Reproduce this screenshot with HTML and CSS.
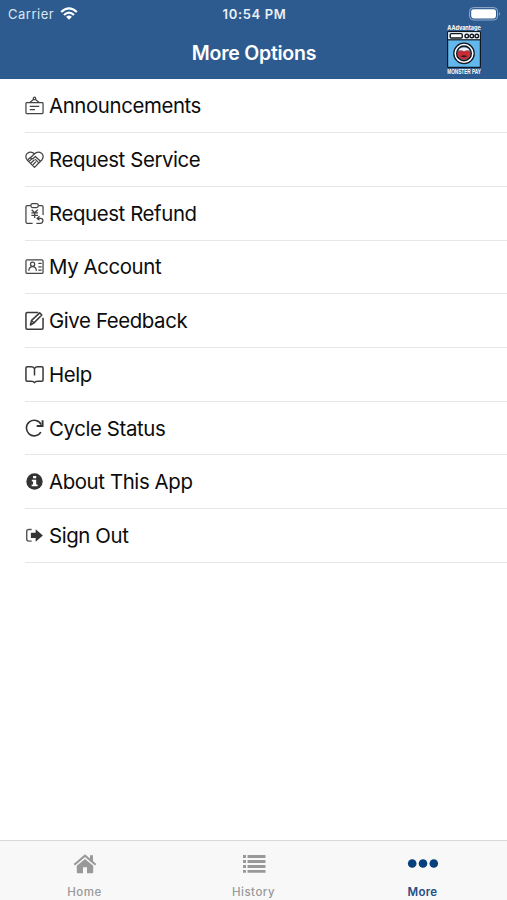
FILE: index.html
```html
<!DOCTYPE html>
<html lang="en">
<head>
<meta charset="utf-8">
<title>More Options</title>
<link rel="stylesheet" href="styles.css">
</head>
<body>
<div class="screen">
  <header class="header">
    <div class="status">
      <div class="carrier"><span>Carrier</span>
        <svg width="18" height="13" viewBox="0 0 18 13"><g fill="none" stroke="#fff" stroke-width="2.3"><path d="M1.2 5Q9-2.2 16.8 5M4 8Q9 3.3 14 8"/></g><path d="M9 12.7L6.1 9.8Q9 7.4 11.9 9.8Z" fill="#fff"/></svg>
      </div>
      <div class="time">10:54 PM</div>
      <div class="battery">
        <svg width="32" height="14" viewBox="0 0 32 14"><rect x=".6" y=".6" width="28" height="12.4" rx="3.8" fill="none" stroke="#93adcc" stroke-width="1"/><rect x="2.2" y="2.2" width="24.8" height="9.2" rx="2.4" fill="#fff"/><path d="M30 4.7q1.8 2.1 0 4.2z" fill="#93adcc"/></svg>
      </div>
    </div>
    <div class="titlebar">
      <h1 class="title">More Options</h1>
      <div class="brand">
        <span class="brand-top">AAdvantage</span>
        <svg width="34" height="37" viewBox="0 0 34 37"><rect x=".6" y=".6" width="32.8" height="35.8" rx="1" fill="#62b8ed" stroke="#111820" stroke-width="1.2"/><path d="M1.2 1.2h31.6v7.5H1.2z" fill="#f4f4f2"/><path d="M1 8.8h32" stroke="#111820" stroke-width="1.2"/><rect x="3.2" y="2.6" width="12" height="4.4" rx="1" fill="#fff" stroke="#111820" stroke-width="1.4"/><g fill="#fff" stroke="#111820" stroke-width="1.4"><circle cx="19.8" cy="5" r="1.8"/><circle cx="24.8" cy="5" r="1.8"/><circle cx="29.8" cy="5" r="1.8"/></g><circle cx="17" cy="22.4" r="10.2" fill="#fff" stroke="#111820" stroke-width="1.3"/><circle cx="17" cy="22.4" r="7.3" fill="#55779f" stroke="#111820" stroke-width="1.5"/><path d="M10.4 22.6q2.2-4.8 6.6-2.6 4.4-2.2 6.6 2.6-1 5.8-6.6 5.900-5.600-.1-6.600-5.900z" fill="#c72d32"/><path d="M13.600 25.300q3.400-2.300 6.800 0-3.400 2-6.800 0z" fill="#351a29"/><path d="M11.500 19.500q1-3 5.500-3t5.500 3q-3-.8-5.500.8-2.500-1.600-5.500-.8z" fill="#e7eff8"/></svg>
        <span class="brand-bottom">MONSTER PAY</span>
      </div>
    </div>
  </header>

  <main class="list">
    <a class="row"><svg class="icon" viewBox="0 0 20 20"><g><rect x="1" y="7" width="18" height="11.500" rx=".8"/><path d="M4.800 7L8.900 3.600M15.200 7l-4.100-3.400M5 11h10M5 14.300h5.500"/><circle cx="10" cy="2.600" r="1.300"/></g></svg><span>Announcements</span></a>
    <a class="row"><svg class="icon" viewBox="0 0 20 20"><g><path d="M10 18.300L2.300 10.500Q-.5 6.500 2.300 3.600 6.300.6 10 4q3.700-3.400 7.700-.4 2.800 2.900 0 6.900z"/><path d="M10 4L5.800 8.200q1.200 2 3.400.2l1.700-1.600 5.400 5M3 10.300l2.800-2.700M6.300 13.700l3.600-3.500M8.300 15.500l3.400-3.300M10.600 9.600l3.700 3.700M4.500 11.800l3.300-3.200"/></g></svg><span>Request Service</span></a>
    <a class="row"><svg class="icon tall" viewBox="0 0 20 24"><g><path d="M6 3.700H2.300Q1 3.700 1 5v16q0 1.500 1.400 1.500H8M14 3.700h3.700Q19 3.700 19 5v8.500"/><rect x="6.200" y="1.500" width="7.800" height="4.200" rx="1.800"/><path d="M7 8l3.200 3.200L13.400 8M6.700 11.300h7M6.700 14h7M10.200 11.300v5.500"/><path d="M15.300 15L12.600 17.200l2.700 2M12.800 17.200h3.700q2.400 0 2.400 2.500t-2.900 2.800H12"/></g></svg><span>Request Refund</span></a>
    <a class="row"><svg class="icon" viewBox="0 0 20 20"><g><rect x="1" y="3" width="18" height="14.300" rx="1.300"/><circle cx="8" cy="7.600" r="2.200"/><path d="M4 14.600q.2-4.400 4-4.400 3.800 0 4 4.400M14 6.800h3.500M14 10.300h3.500M14 13.700h3.500"/></g></svg><span>My Account</span></a>
    <a class="row"><svg class="icon bold" viewBox="0 0 20 20"><g><path d="M14 1.500H2.300Q1 1.500 1 2.800v15q0 1.300 1.300 1.300h15.400q1.300 0 1.300-1.300V7"/><path d="M5.700 14.700l1.200-4.800L15.500 2l2.200 2.300-8.500 8.500z"/><path d="M7 10.300l2.600 2.300"/></g></svg><span>Give Feedback</span></a>
    <a class="row"><svg class="icon bold" viewBox="0 0 20 20"><g><path d="M10 3.700Q8.700 1.900 6.700 1.900H2.300Q1 1.900 1 3.200v12.600q0 1.200 1.300 1.200h4.300q2.400 0 3.400 1.500 1-1.500 3.400-1.500h4.300q1.300 0 1.300-1.200V3.200q0-1.300-1.300-1.300h-4.400Q11.300 1.900 10 3.700zV11"/></g></svg><span>Help</span></a>
    <a class="row"><svg class="icon" viewBox="0 0 20 20"><path d="M17 5.800A8.200 8.200 0 1 0 16.700 13.800" fill="none" stroke="#333" stroke-width="1.700"/><path d="M19.500 1.200v7.200H12.300V6.200h5.200V1.200z" fill="#333"/></svg><span>Cycle Status</span></a>
    <a class="row"><svg class="icon" viewBox="0 0 20 20"><circle cx="10" cy="10" r="8.600" fill="#333"/><path d="M8.500 4.100h3.300v2.600H8.500zM7.200 8.200h4.600v4.900h1.500v1.900H7v-1.900h1.500v-3H7.200z" fill="#fff"/></svg><span>About This App</span></a>
    <a class="row"><svg class="icon" viewBox="0 0 20 20"><path d="M7 3.700H4Q1.800 3.700 1.800 5.700v8.100q0 2.100 2.200 2.100h3" fill="none" stroke="#555" stroke-width="1.500"/><path d="M6.200 7.200h5V3.300l7.600 6.600-7.600 6.600v-3.900h-5z" fill="#333"/></svg><span>Sign Out</span></a>
  </main>

  <nav class="tabs">
    <a class="tab"><svg width="24" height="20" viewBox="0 0 24 20"><path d="M12 5l8.200 6.800v6.500q0 .9-.9.900H14v-6h-4v6H4.700q-.9 0-.9-.9v-6.500z" fill="#999"/><path d="M1.300 10.700L12 1.700l10.700 9" fill="none" stroke="#999" stroke-width="2.100"/><path d="M17 1.200h3v6.500l-3-2.500z" fill="#999"/></svg><span>Home</span></a>
    <a class="tab"><svg width="24" height="20" viewBox="0 0 24 20"><path d="M1 1h3v3H1zM5.500 1h18v3h-18zM1 6h3v3H1zM5.500 6h18v3h-18zM1 11h3v3H1zM5.500 11h18v3h-18zM1 16h3v2.800H1zM5.500 16h18v2.800h-18z" fill="#999"/></svg><span>History</span></a>
    <a class="tab active"><svg width="32" height="20" viewBox="0 0 32 20"><g fill="#073f7d"><circle cx="5.200" cy="9.500" r="4.300"/><circle cx="16" cy="9.500" r="4.300"/><circle cx="26.800" cy="9.500" r="4.300"/></g></svg><span>More</span></a>
  </nav>
</div>
</body>
</html>
```
FILE: styles.css
```css
* { box-sizing: border-box; }
body { margin: 0; background: #fff; font-family: Inter, "Liberation Sans", sans-serif; }
svg { display: block; }
.screen { width: 507px; height: 900px; display: flex; flex-direction: column; overflow: hidden; }
.header { height: 79px; flex: none; background: #2d5b8f; color: #fff; }
.status { height: 26px; display: grid; grid-template-columns: 1fr auto 1fr; align-items: center; padding: 1px 6px 0 8px; }
.carrier { display: flex; align-items: center; gap: 6px; font-size: 13px; letter-spacing: .5px; color: #dce6f1; }
.time { font-size: 13px; font-weight: 600; letter-spacing: .65px; color: #e9f0f8; }
.battery { display: flex; justify-content: flex-end; }
.titlebar { height: 53px; display: grid; grid-template-columns: 1fr auto 1fr; }
.title { grid-column: 2; margin: 0; padding-left: 1px; line-height: 55px; font-size: 19.500px; font-weight: 600; letter-spacing: -.25px; }
.brand { display: flex; flex-direction: column; align-items: center; justify-self: end; width: 40px; margin-right: 23px; white-space: nowrap; }
.brand-top { font-size: 5.500px; line-height: 5px; font-weight: 700; }
.brand svg { flex: none; }
.brand-bottom { font-family: "Liberation Sans", sans-serif; font-size: 7px; line-height: 7px; font-weight: 700; transform: scaleX(.67); }
.list { flex: 1; padding: .4px 0 0 25px; color: #0c0c0c; }
.row { display: flex; align-items: center; gap: 5.500px; height: 53.720px; border-bottom: 1px solid #e6e6e6; font-size: 20.400px; letter-spacing: -.39px; white-space: nowrap; }
.icon { width: 19px; height: 19px; margin-left: -.5px; flex: none; }
.icon.tall { height: 23px; }
.icon g { fill: none; stroke: #444; stroke-width: 1.300; stroke-linejoin: round; }
.icon.bold g { stroke: #3a3a3a; stroke-width: 1.600; }
.tabs { height: 60px; flex: none; display: grid; grid-template-columns: repeat(3, 1fr); border-top: 1px solid #d9d9d9; background: #f8f8f8; color: #999; }
.tab { display: flex; flex-direction: column; align-items: center; padding-top: 13px; font-size: 11.500px; font-weight: 500; letter-spacing: .5px; }
.tab span { line-height: 14px; margin-top: 11px; }
.active { color: #1f4f85; font-weight: 600; letter-spacing: .3px; }
```
